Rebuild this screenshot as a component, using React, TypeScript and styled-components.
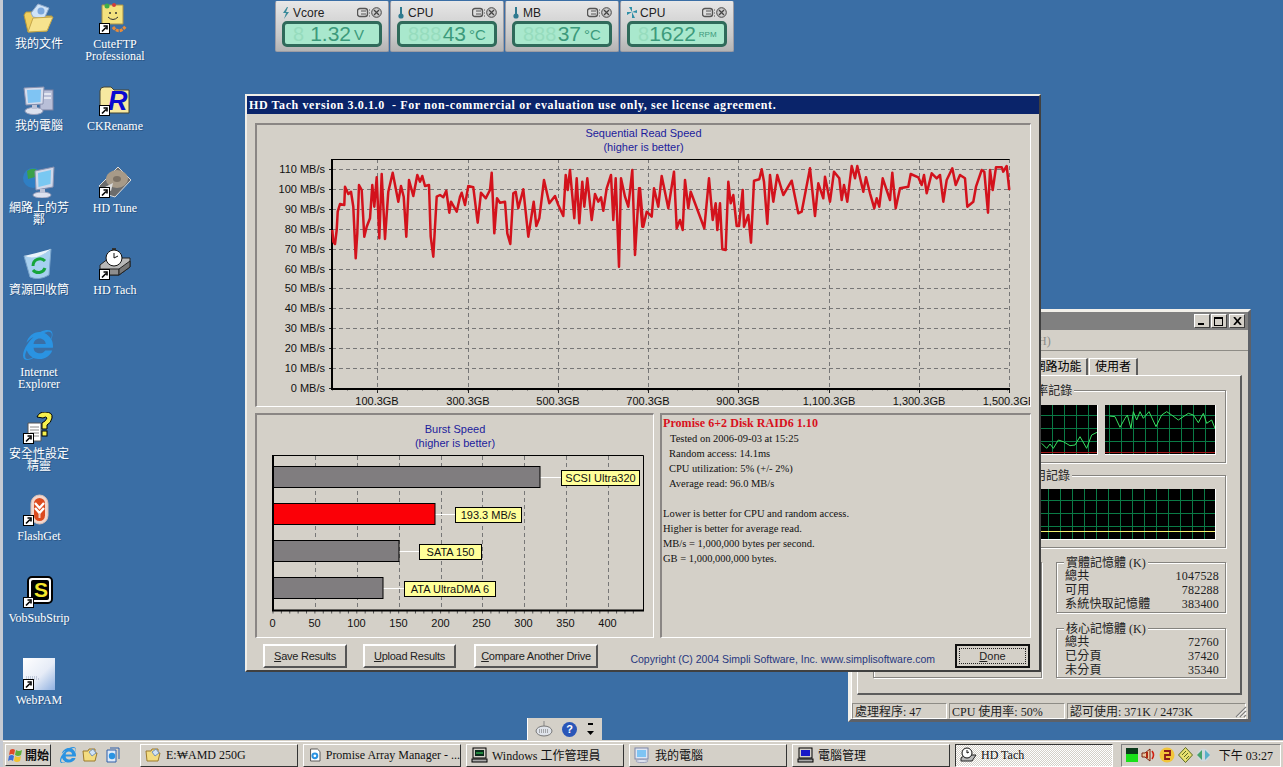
import React from "react";
import styled, { createGlobalStyle } from "styled-components";
import { FaInternetExplorer } from "react-icons/fa";

const SERIF = `"Liberation Serif", "Noto Sans CJK TC", serif`;
const SANS = `"Liberation Sans", Arial, sans-serif`;
const FACE = "#d4d0c8";

const Global = createGlobalStyle`
  html, body { margin: 0; padding: 0; overflow: hidden; background: #3a6ea5; }
  * { box-sizing: border-box; }
`;

const Screen = styled.div`
  position: relative;
  width: 1283px;
  height: 767px;
  display: flex;
  flex-direction: column;
  overflow: hidden;
  font-family: ${SERIF};
  font-size: 12px;
  color: #000;
`;

const Desktop = styled.div`
  flex: 1;
  background: #3a6ea5;
  border-left: 3px solid #c5cad3;
  display: grid;
  grid-template-rows: repeat(9, 82px);
  grid-auto-flow: column;
  grid-auto-columns: 72px;
  column-gap: 4px;
  align-content: start;
`;

const DesktopItem = styled.div`
  display: flex;
  flex-direction: column;
  align-items: center;
  padding-top: 2px;
`;

const IconBox = styled.div`
  position: relative;
  width: 32px;
  height: 32px;
  line-height: 0;
`;

const ShortcutBadge = styled.svg`
  position: absolute;
  left: 0;
  bottom: 0;
`;

const DesktopLabel = styled.div`
  width: 66px;
  margin-top: 4px;
  color: #fff;
  font-size: 12px;
  line-height: 12px;
  text-align: center;
  text-shadow: 1px 1px 0 #2a5584;
`;

/* ---------- desktop icons ---------- */

const Shortcut = () => (
  <ShortcutBadge width="11" height="11" viewBox="0 0 11 11">
    <rect x="0.5" y="0.5" width="10" height="10" fill="#fff" stroke="#000" />
    <path d="M3 8.5 L7 4.5 M4.5 3 H8 V6.5" stroke="#000" strokeWidth="1.6" fill="none" />
  </ShortcutBadge>
);

const DocsIcon = () => (
  <svg width="32" height="32" viewBox="0 0 32 32">
    <path d="M1 13 L5 30 L24 29 L29 14 L15 14 L13 10 L3 10Z" fill="#f0d060" stroke="#b89a3c" />
    <path d="M8 11 L15 2 L26 6 L21 17 L10 15Z" fill="#cfe3f7" stroke="#8fa8c8" />
    <circle cx="18" cy="9" r="3.5" fill="#7ba7dc" />
    <path d="M5 30 L10 16 L30 15 L24 29Z" fill="#f7e38e" stroke="#c4a64a" />
  </svg>
);

const CuteIcon = () => (
  <svg width="32" height="32" viewBox="0 0 32 32">
    <path d="M3 3 H24 V22 H3Z" fill="#f3e27e" stroke="#a89148" />
    <circle cx="8" cy="4" r="2.5" fill="#3fae49" />
    <circle cx="15" cy="3" r="2" fill="#d23a3a" />
    <circle cx="11" cy="11" r="1" fill="#333" />
    <circle cx="17" cy="11" r="1" fill="#333" />
    <path d="M9 15 Q14 20 19 15" stroke="#333" fill="none" />
    <path d="M14 25 Q20 33 27 24" stroke="#e88b3a" strokeWidth="3" fill="none" strokeDasharray="3 1" />
  </svg>
);

const ComputerIcon = () => (
  <svg width="32" height="32" viewBox="0 0 32 32">
    <rect x="17" y="6" width="13" height="20" fill="#b9bfd8" stroke="#7b82a3" />
    <rect x="19" y="9" width="9" height="2" fill="#e3e6f1" />
    <rect x="19" y="13" width="9" height="2" fill="#e3e6f1" />
    <path d="M1 4 L21 3 L20 20 L3 21Z" fill="#d5dcec" stroke="#8a92b0" />
    <path d="M4 6 L18 5.5 L17.5 18 L5 19Z" fill="#7fc4f3" />
    <ellipse cx="11" cy="27" rx="9" ry="3.5" fill="#dde1ee" stroke="#9aa0bb" />
    <rect x="9" y="21" width="5" height="4" fill="#bcc2d6" />
  </svg>
);

const RenameGlyph = styled.text`
  font: italic bold 27px ${SANS};
  fill: #0a0ad0;
`;

const RenameIcon = () => (
  <svg width="32" height="32" viewBox="0 0 32 32">
    <path d="M1 7 Q1 3 5 3 H12 L15 6 H30 V29 H1Z" fill="#f7e9a0" stroke="#443" />
    <RenameGlyph x="9" y="26">R</RenameGlyph>
  </svg>
);

const NetworkIcon = () => (
  <svg width="32" height="32" viewBox="0 0 32 32">
    <circle cx="10" cy="12" r="10" fill="#2f7fc4" />
    <path d="M4 5 Q10 1 14 4 L12 11 L5 13Z" fill="#3aa04a" />
    <path d="M12 5 L31 1 L30 21 L13 24Z" fill="#cfd8ea" stroke="#8a92b0" />
    <path d="M15 7 L28 4 L27.5 18 L15.5 21Z" fill="#79c8f2" />
    <ellipse cx="19" cy="29" rx="9" ry="3" fill="#dde1ee" stroke="#9aa0bb" />
    <rect x="17" y="23" width="5" height="4" fill="#bcc2d6" />
  </svg>
);

const TuneIcon = () => (
  <svg width="32" height="32" viewBox="0 0 32 32">
    <path d="M0 20 L19 1 L32 14 L16 31 L3 27Z" fill="#6c6c6c" stroke="#dcdcdc" />
    <ellipse cx="18" cy="13" rx="11" ry="9" fill="#a79a88" />
    <ellipse cx="18" cy="13" rx="4" ry="3" fill="#7d7265" />
    <path d="M4 22 L14 17 L12 25Z" fill="#ddd" />
  </svg>
);

const RecycleIcon = () => (
  <svg width="32" height="32" viewBox="0 0 32 32">
    <path d="M1 8 Q14 11 28 1 L26 27 Q16 33 7 29Z" fill="#a7d0ef" stroke="#7aa4ca" />
    <path d="M1 8 Q14 13 28 1 Q14 5 1 8Z" fill="#e8f3fb" />
    <path d="M10 18 A7 7 0 0 1 22 13 M22 20 A7 7 0 0 1 10 22" stroke="#16a53a" strokeWidth="3" fill="none" />
  </svg>
);

const StopwatchIcon = () => (
  <svg width="32" height="32" viewBox="0 0 32 32">
    <path d="M1 17 L10 10 H31 V19 L20 27 H1Z" fill="#b8b8b8" stroke="#222" />
    <path d="M1 21 H20 V27 H1Z" fill="#8e8e8e" stroke="#222" />
    <path d="M20 21 L31 13 V19 L20 27Z" fill="#777" stroke="#222" />
    <rect x="13" y="0" width="4" height="2" fill="#333" />
    <circle cx="15" cy="10" r="8" fill="#fff" stroke="#111" />
    <path d="M15 5 V10 L19 8" stroke="#111" fill="none" />
  </svg>
);

const IeIcon = styled(FaInternetExplorer)`
  color: #2a93e2;
`;

const WizardIcon = () => (
  <svg width="32" height="32" viewBox="0 0 32 32">
    <path d="M5 11 H18 V29 H5Z" fill="#fff" stroke="#555" />
    <path d="M7 15 H16 M7 18 H16 M7 21 H16 M7 24 H16" stroke="#888" />
    <path d="M14 5 Q16 0 22 0 Q30 0 29 6 Q28 11 24 13 V17 H19 V11 Q23 9 24 6 Q23 4 20 6Z" fill="#f6f14e" stroke="#000" />
    <rect x="19" y="19" width="5" height="5" fill="#f6f14e" stroke="#000" />
  </svg>
);

const FlashIcon = () => (
  <svg width="32" height="32" viewBox="0 0 32 32">
    <rect x="8" y="1" width="17" height="29" rx="8.5" fill="#f3d6cc" stroke="#d8c0b6" />
    <rect x="11" y="4" width="11" height="23" rx="5.5" fill="#dc4a1e" />
    <path d="M12 9 L16.5 14 L21 9 M12 14 L16.5 19 L21 14" stroke="#fff" strokeWidth="2.4" fill="none" />
    <path d="M16.5 19 V24" stroke="#f8cbb9" strokeWidth="2" />
  </svg>
);

const VobGlyph = styled.text`
  font: bold 21px ${SANS};
  fill: #f6e62b;
`;

const VobIcon = () => (
  <svg width="32" height="32" viewBox="0 0 32 32">
    <rect x="5" y="1" width="24" height="26" rx="4" fill="#fff" stroke="#000" strokeWidth="2" />
    <rect x="8" y="4" width="18" height="20" rx="2" fill="#000" />
    <VobGlyph x="11" y="21">S</VobGlyph>
  </svg>
);

const WebPamIcon = () => (
  <svg width="32" height="32" viewBox="0 0 32 32">
    <defs>
      <linearGradient id="pam" x1="0" y1="0" x2="1" y2="1">
        <stop offset="0" stopColor="#ffffff" />
        <stop offset="0.55" stopColor="#e6ecf7" />
        <stop offset="1" stopColor="#8fb0e0" />
      </linearGradient>
    </defs>
    <rect width="32" height="32" fill="url(#pam)" />
    <path d="M3 19 H15 M3 21 H17" stroke="#9aa8c0" strokeDasharray="1 1" />
  </svg>
);

const icons: { label: string; art: React.ReactNode; shortcut?: boolean }[] = [
  { label: "我的文件", art: <DocsIcon /> },
  { label: "我的電腦", art: <ComputerIcon /> },
  { label: "網路上的芳鄰", art: <NetworkIcon /> },
  { label: "資源回收筒", art: <RecycleIcon /> },
  { label: "Internet Explorer", art: <IeIcon size={30} /> },
  { label: "安全性設定精靈", art: <WizardIcon />, shortcut: true },
  { label: "FlashGet", art: <FlashIcon />, shortcut: true },
  { label: "VobSubStrip", art: <VobIcon />, shortcut: true },
  { label: "WebPAM", art: <WebPamIcon />, shortcut: true },
  { label: "CuteFTP Professional", art: <CuteIcon />, shortcut: true },
  { label: "CKRename", art: <RenameIcon />, shortcut: true },
  { label: "HD Tune", art: <TuneIcon />, shortcut: true },
  { label: "HD Tach", art: <StopwatchIcon />, shortcut: true },
];

/* ---------- sensor gadgets ---------- */

const SensorBar = styled.div`
  position: absolute;
  left: 275px;
  top: 1px;
  display: flex;
  gap: 1px;
`;

const Sensor = styled.div`
  width: 114px;
  height: 51px;
  padding: 3px 6px 0 6px;
  background: linear-gradient(#e6e6e6, #c8c8c8 70%, #b4b4b4);
  border: 1px solid #9c9ca4;
  border-top-color: #e8e8e8;
  border-radius: 2px;
`;

const SensorHead = styled.div`
  display: flex;
  align-items: center;
  gap: 3px;
  height: 15px;
  font: 12px ${SANS};
  color: #222;
`;

const SensorName = styled.span`
  flex: 1;
`;

const Lcd = styled.div`
  display: flex;
  align-items: center;
  height: 26px;
  margin-top: 1px;
  padding: 0 3px 0 8px;
  border: 3px solid #2f6a5a;
  border-radius: 5px;
  background: #a9e8cd;
  font-family: ${SANS};
  color: #3c9a7b;
  overflow: hidden;
`;

const LcdGhost = styled.span`
  color: #96dcbd;
  font-size: 20px;
  line-height: 20px;
`;

const LcdValue = styled.span`
  flex: 1;
  text-align: right;
  font-size: 21px;
  line-height: 20px;
`;

const LcdUnit = styled.span<{ $small?: boolean }>`
  width: ${(p) => (p.$small ? "27px" : "25px")};
  padding-left: 3px;
  font-size: ${(p) => (p.$small ? "8px" : "15px")};
  line-height: 15px;
`;

const BoltIcon = () => (
  <svg width="8" height="12" viewBox="0 0 8 12">
    <path d="M5 0 L1 6 H4 L2 12 L7 5 H4 L6 0Z" fill="#3a8a9a" />
  </svg>
);
const ThermoIcon = () => (
  <svg width="8" height="12" viewBox="0 0 8 12">
    <rect x="3" y="0" width="2" height="8" fill="#2f7a8f" />
    <circle cx="4" cy="9" r="2.6" fill="#2f7a8f" />
  </svg>
);
const FanIcon = () => (
  <svg width="10" height="11" viewBox="0 0 10 11">
    <path d="M5 5 L2 0 H5Z M5 5 L10 3 V6Z M5 5 L8 11 H5Z M5 5 L0 8 V5Z" fill="#2f8fa8" />
  </svg>
);
const SensorTools = () => (
  <svg width="25" height="11" viewBox="0 0 25 11">
    <rect x="0.5" y="1.5" width="10" height="8" rx="2.5" fill="#ddd" stroke="#555" strokeWidth="1.4" />
    <path d="M4 4 H9 M4 7 H9" stroke="#555" />
    <path d="M12 3 H13 M12 6 H13 M12 9 H13" stroke="#555" />
    <circle cx="19.5" cy="5.5" r="4.8" fill="#ccc" stroke="#444" />
    <path d="M17 3 L22 8 M22 3 L17 8" stroke="#444" strokeWidth="1.3" />
  </svg>
);

const sensors = [
  { name: "Vcore", icon: <BoltIcon />, ghost: "8", value: "1.32", unit: "V" },
  { name: "CPU", icon: <ThermoIcon />, ghost: "888", value: "43", unit: "°C" },
  { name: "MB", icon: <ThermoIcon />, ghost: "888", value: "37", unit: "°C" },
  { name: "CPU", icon: <FanIcon />, ghost: "8", value: "1622", unit: "RPM", small: true },
];

/* ---------- HD Tach window ---------- */

const TachWindow = styled.div`
  position: absolute;
  left: 245px;
  top: 94px;
  z-index: 2;
  width: 796px;
  height: 578px;
  display: flex;
  flex-direction: column;
  background: ${FACE};
  border: 2px solid;
  border-color: #f0eee8 #404040 #404040 #f0eee8;
`;

const TachTitle = styled.div`
  height: 18px;
  padding-left: 2px;
  background: #0a246a;
  color: #fff;
  font: bold 12px/18px ${SERIF};
  letter-spacing: 0.6px;
  white-space: pre;
`;

const TachBody = styled.div`
  flex: 1;
  display: flex;
  flex-direction: column;
  padding: 9px 8px 0;
  gap: 6px;
`;

const Panel = styled.div<{ $height: number }>`
  height: ${(p) => p.$height}px;
  border: 2px solid;
  border-color: #8a8684 #fff #fff #8a8684;
  border-width: 2px 1px 1px 2px;
  overflow: hidden;
`;

const PanelRow = styled.div`
  display: grid;
  grid-template-columns: 399px 371px;
  column-gap: 6px;
`;

const ChartTitle = styled.div<{ $top: number }>`
  padding-top: ${(p) => p.$top}px;
  text-align: center;
  color: #1c1c9c;
  font: 11px/14px ${SANS};
`;

const ChartSvg = styled.svg`
  display: block;
`;

const AxisText = styled.text`
  font: 11px ${SANS};
  fill: #111;
`;

const TagText = styled.text`
  font: 11px ${SANS};
  fill: #111;
`;

const DetailPane = styled.div`
  padding: 1px 0 0 1px;
  font: 10.5px/15px ${SERIF};
  color: #111;
`;

const DetailHead = styled.div`
  color: #d8101c;
  font-weight: bold;
  font-size: 12px;
  letter-spacing: 0.05px;
`;

const DetailLine = styled.div<{ $indent?: number; $gap?: boolean }>`
  padding-left: ${(p) => p.$indent ?? 0}px;
  margin-top: ${(p) => (p.$gap ? "15px" : "0")};
`;

const ButtonRow = styled.div`
  display: flex;
  align-items: center;
  height: 24px;
  padding: 0 1px 0 8px;
`;

const WinButton = styled.button<{ $width: number; $after?: number }>`
  width: ${(p) => p.$width}px;
  height: 24px;
  margin-right: ${(p) => p.$after ?? 0}px;
  padding: 0;
  background: ${FACE};
  color: #222;
  font: 11px ${SANS};
  letter-spacing: -0.25px;
  white-space: nowrap;
  border: 2px solid;
  border-color: #fff #555 #555 #fff;
`;

const DoneButton = styled.button`
  width: 75px;
  height: 24px;
  padding: 2px;
  background: ${FACE};
  border: 2px solid #111;
  font: 11px ${SANS};
  color: #222;
`;

const DoneFocus = styled.span`
  display: block;
  height: 100%;
  line-height: 15px;
  border: 1px dotted #222;
`;

const Copyright = styled.div`
  flex: 1;
  text-align: right;
  padding: 5px 20px 0 0;
  color: #27377f;
  font: 10.5px ${SANS};
`;

/* red trace, traced in crop coordinates */
const traceA: [number, number][] = [
  [262,420],[265,455],[270,462],[275,420],[278,365],[285,342],[298,345],[300,290],[310,312],[318,305],[325,350],[332,505],[337,430],[342,285],[350,300],[358,440],[365,410],[375,385],[382,285],[388,350],[395,262],[403,445],[410,252],[420,447],[430,305],[443,248],[460,335],[468,288],[476,320],[484,440],[492,270],[505,318],[517,255],[525,275],[532,258],[540,288],[552,285],[557,440],[565,500],[575,320],[585,315],[595,322],[604,302],[613,368],[618,335],[635,365],[645,320],[650,308],[660,345],[670,288],[685,292],[698,398],[708,308],[722,325],[735,300],[740,248],[748,430],[756,325],[765,338],[780,335],[787,430],[796,462],[805,310],[812,305],[820,355],[835,298],[850,440],[866,335],[874,408],[883,385],[897,270],[913,340],[930,318],[940,345],[955,378],[962,255],[968,300],[975,240],[988,385],[995,265],[1003,400],[1012,275],[1018,350],[1027,265],[1040,390],[1050,312],[1060,335],[1068,322],[1075,362],[1085,295],[1098,255],[1105,390],[1112,265],[1122,530],[1128,265],[1140,320],[1150,350],[1162,240],[1170,495],[1182,295],[1192,410],
];
const traceB: [number, number][] = [
  [0,295],[10,410],[20,365],[35,380],[42,295],[55,350],[65,258],[85,355],[102,245],[110,415],[120,390],[128,420],[135,270],[145,355],[152,305],[165,340],[193,415],[207,265],[218,390],[227,340],[232,420],[240,340],[247,478],[257,480],[265,275],[272,340],[280,315],[290,408],[297,408],[308,300],[312,410],[325,375],[333,458],[342,272],[358,268],[365,238],[372,275],[382,402],[390,255],[400,335],[412,255],[430,315],[455,272],[475,370],[485,365],[510,235],[525,378],[535,280],[550,325],[555,260],[570,335],[582,245],[598,265],[605,330],[612,285],[622,335],[635,228],[645,265],[652,228],[670,305],[678,262],[690,310],[703,355],[710,325],[718,350],[728,265],[750,330],[757,248],[767,355],[780,295],[805,290],[812,252],[835,262],[845,285],[852,255],[860,310],[875,250],[890,265],[900,255],[910,335],[920,270],[937,235],[947,285],[960,255],[975,265],[982,350],[1000,335],[1008,290],[1025,240],[1033,245],[1044,368],[1050,240],[1058,300],[1068,232],[1085,232],[1090,245],[1100,228],[1108,300],
];
const traceLine = [
  ...traceA.map(([x, y]) => `${(245 + x / 3).toFixed(1)},${(90 + y / 3).toFixed(1)}`),
  ...traceB.map(([x, y]) => `${(640 + x / 3).toFixed(1)},${(90 + y / 3).toFixed(1)}`),
].join(" ");

const yLines = [388, 368, 348, 328, 308, 288, 269, 249, 229, 209, 189, 169];
const xLines = [377, 468, 558, 648, 738, 829, 919, 1009];
const xNames = ["100.3GB", "300.3GB", "500.3GB", "700.3GB", "900.3GB", "1,100.3GB", "1,300.3GB", "1,500.3GB"];
const minorTicks = Array.from({ length: 46 }, (_, i) => 332 + i * 15);

const SpeedChart = () => (
  <ChartSvg width="773" height="253" viewBox="257 154 773 253">
    {yLines.map((y, i) => (
      <g key={y}>
        <line x1="329" x2="332" y1={y + 0.5} y2={y + 0.5} stroke="#222" />
        {i > 0 && <line x1="332" x2="1009" y1={y + 0.5} y2={y + 0.5} stroke="#777" strokeDasharray="4 3" />}
        <AxisText x="325" y={y + 4} textAnchor="end">{`${i * 10} MB/s`}</AxisText>
      </g>
    ))}
    {xLines.map((x, i) => (
      <g key={x}>
        <line x1={x + 0.5} x2={x + 0.5} y1="159" y2="388" stroke="#777" strokeDasharray="4 3" />
        <line x1={x + 0.5} x2={x + 0.5} y1="388" y2="393" stroke="#222" />
        <AxisText x={x} y="405" textAnchor="middle">{xNames[i]}</AxisText>
      </g>
    ))}
    {minorTicks.map((x) => (
      <line key={x} x1={x + 0.5} x2={x + 0.5} y1="388" y2="390.5" stroke="#555" />
    ))}
    <path d="M1009.5 159.5 H332.5 V388.5 H1009.5" fill="none" stroke="#000" strokeWidth="1" />
    <path d="M332 159 V389 H1010" fill="none" stroke="#000" strokeWidth="2" />
    <polyline points={traceLine} fill="none" stroke="#d3121c" strokeWidth="2.5" strokeLinejoin="round" />
  </ChartSvg>
);

const burstTicks = [
  { x: 273, n: "0" }, { x: 315, n: "50" }, { x: 357, n: "100" }, { x: 399, n: "150" }, { x: 441, n: "200" },
  { x: 482, n: "250" }, { x: 524, n: "300" }, { x: 566, n: "350" }, { x: 608, n: "400" },
];
const burstBars = [
  { y: 466, end: 540, fill: "#807d7f", tagX: 561, tagW: 78, text: "SCSI Ultra320" },
  { y: 503, end: 435, fill: "#fb0007", tagX: 455, tagW: 66, text: "193.3 MB/s" },
  { y: 540, end: 399, fill: "#807d7f", tagX: 419, tagW: 62, text: "SATA 150" },
  { y: 577, end: 383, fill: "#807d7f", tagX: 404, tagW: 91, text: "ATA UltraDMA 6" },
];
const burstMinor = Array.from({ length: 44 }, (_, i) => 273 + i * 8.38);

const BurstChart = () => (
  <ChartSvg width="396" height="187" viewBox="257 450 396 187">
    {burstTicks.map((t) => (
      <g key={t.n}>
        {t.x > 273 && <line x1={t.x + 0.5} x2={t.x + 0.5} y1="456" y2="610" stroke="#777" strokeDasharray="4 3" />}
        <AxisText x={t.x - 0.5} y="627" textAnchor="middle">{t.n}</AxisText>
      </g>
    ))}
    {burstMinor.map((x) => (
      <line key={x} x1={x} x2={x} y1="610" y2="613.5" stroke="#555" />
    ))}
    <path d="M273.5 455.5 H643.5 V610" fill="none" stroke="#000" />
    <path d="M273 455 V610.5 H644" fill="none" stroke="#000" strokeWidth="2" />
    {burstBars.map((b) => (
      <g key={b.text}>
        <line x1={b.end} x2={b.tagX} y1={b.y + 11.5} y2={b.y + 11.5} stroke="#fff" />
        <rect x="273.5" y={b.y + 0.5} width={b.end - 273.5} height="21" fill={b.fill} stroke="#000" />
        <rect x={b.tagX + 0.5} y={b.y + 4.5} width={b.tagW} height="15" fill="#ffff99" stroke="#000" />
        <TagText x={b.tagX + b.tagW / 2 + 0.5} y={b.y + 16} textAnchor="middle">{b.text}</TagText>
      </g>
    ))}
  </ChartSvg>
);

/* ---------- Task manager window ---------- */

const TaskWindow = styled.div`
  position: absolute;
  left: 848px;
  top: 309px;
  z-index: 1;
  width: 403px;
  display: flex;
  flex-direction: column;
  background: ${FACE};
  border: 3px solid ${FACE};
  box-shadow: inset 1px 1px 0 #fff;
  border-top-color: #f2f0ea;
  border-left-color: #f2f0ea;
  border-right-color: #5d6168;
  border-bottom-color: #5d6168;
`;

const TaskTitle = styled.div`
  height: 18px;
  display: flex;
  align-items: center;
  justify-content: flex-end;
  gap: 1px;
  padding-right: 3px;
  background: #808080;
  color: #d4d0c8;
  font-weight: bold;
`;

const TitleLabel = styled.span`
  flex: 1;
  padding-left: 20px;
`;

const CaptionButton = styled.div<{ $gap?: number }>`
  width: 16px;
  height: 14px;
  margin-left: ${(p) => p.$gap ?? 0}px;
  display: flex;
  align-items: center;
  justify-content: center;
  background: ${FACE};
  border: 1px solid;
  border-color: #fff #404040 #404040 #fff;
`;

const MenuBar = styled.div`
  height: 21px;
  display: flex;
  align-items: center;
  gap: 8px;
  padding-left: 15px;
  color: #8c8c88;
  border-bottom: 1px solid #8e8c86;
`;

const TabRow = styled.div`
  height: 24px;
  display: flex;
  align-items: flex-end;
  padding-left: 18px;
  gap: 1px;
`;

const Tab = styled.div<{ $width: number }>`
  width: ${(p) => p.$width}px;
  height: 17px;
  text-align: center;
  line-height: 17px;
  font-size: 12px;
  border-left: 1px solid #fff;
  border-top: 1px solid #fff;
  border-right: 2px solid #5c5c5c;
`;

const TabPanel = styled.div`
  height: 320px;
  margin: 0 6px;
  padding: 7px 14px 15px 15px;
  display: flex;
  flex-direction: column;
  border: 1px solid #fff;
  border-right: 2px solid #5c5c5c;
  border-bottom: 2px solid #5c5c5c;
`;

const Group = styled.fieldset<{ $width?: number; $height: number; $grow?: boolean }>`
  margin: 0;
  padding: 0;
  min-width: 0;
  width: ${(p) => (p.$width ? `${p.$width}px` : "auto")};
  flex: ${(p) => (p.$grow ? 1 : "none")};
  height: ${(p) => p.$height}px;
  border: 1px solid #85837f;
  box-shadow: 1px 1px 0 #fff, inset 1px 1px 0 #fff;
`;

const GroupLegend = styled.legend<{ $left: number }>`
  margin-left: ${(p) => p.$left}px;
  padding: 0 2px;
  height: 14px;
  line-height: 16px;
  background: ${FACE};
  font-size: 12px;
  color: #222;
`;

const HistoryRow = styled.div<{ $after: number }>`
  display: flex;
  gap: 10px;
  margin-bottom: ${(p) => p.$after}px;
`;

const GraphRow = styled.div<{ $top: number }>`
  display: flex;
  justify-content: flex-end;
  gap: 7px;
  padding: ${(p) => p.$top}px 9px 0 0;
`;

const GraphSvg = styled.svg`
  display: block;
  background: #000;
  border-right: 1px solid #fff;
  border-bottom: 1px solid #fff;
`;

const BottomRow = styled.div`
  display: flex;
  gap: 14px;
`;

const StatColumn = styled.div`
  width: 170px;
  display: flex;
  flex-direction: column;
  gap: 8px;
`;

const StatRow = styled.div`
  display: flex;
  justify-content: space-between;
  height: 14px;
  padding: 0 6px 0 8px;
  line-height: 14px;
  font-size: 12px;
  color: #222;
  letter-spacing: 0.2px;
`;

const StatusBar = styled.div`
  position: relative;
  height: 16px;
  margin-top: 8px;
  display: flex;
  gap: 2px;
  padding-left: 1px;
  font-size: 12px;
  line-height: 16px;
`;

const StatusPane = styled.div<{ $width: number }>`
  width: ${(p) => p.$width}px;
  padding-left: 2px;
  border: 1px solid;
  border-color: #8e8c86 #fff #fff #8e8c86;
  color: #222;
  white-space: nowrap;
`;

const Grip = styled.svg`
  position: absolute;
  right: 1px;
  bottom: 1px;
`;

type Pt = [number, number];
const gridLines = (w: number, h: number, dx: number, dy: number) => {
  const out: React.ReactNode[] = [];
  for (let x = dx; x < w; x += 12) out.push(<line key={`v${x}`} x1={x + 0.5} x2={x + 0.5} y1="0" y2={h} stroke="#0a7a45" />);
  for (let y = dy; y < h; y += 13) out.push(<line key={`h${y}`} x1="0" x2={w} y1={y + 0.5} y2={y + 0.5} stroke="#0a7a45" />);
  return out;
};
const toLine = (pts: Pt[], ox: number, oy: number) => pts.map(([x, y]) => `${ox + x / 3},${oy + y / 3}`).join(" ");

const cpuA: Pt[] = [[35,430],[50,445],[60,432],[70,445],[85,420],[100,425],[120,437],[135,435],[150,410],[170,445],[185,405],[205,395]];
const cpuB: Pt[] = [[238,348],[255,350],[270,382],[285,355],[292,345],[303,385],[310,335],[320,360],[330,335],[340,355],[357,335],[378,380],[395,345],[410,335],[425,345],[445,360],[475,340],[490,345],[505,368],[520,340],[530,370],[545,360],[555,385]];

const CpuGraphA = () => (
  <GraphSvg width="110" height="50">
    {gridLines(110, 50, 4, 10)}
    <line x1="0" x2="110" y1="47.5" y2="47.5" stroke="#a01818" />
    <polyline points={toLine(cpuA, 42, -105)} fill="none" stroke="#38e060" />
  </GraphSvg>
);
const CpuGraphB = () => (
  <GraphSvg width="111" height="50">
    {gridLines(111, 50, 4, 10)}
    <line x1="0" x2="111" y1="47.5" y2="47.5" stroke="#a01818" />
    <polyline points={toLine(cpuB, -75, -105)} fill="none" stroke="#38e060" />
  </GraphSvg>
);
const MemGraph = () => (
  <GraphSvg width="232" height="51">
    {gridLines(232, 51, 4, 11)}
    <line x1="0" x2="232" y1="42.5" y2="42.5" stroke="#f4f070" />
  </GraphSvg>
);

/* ---------- Taskbar ---------- */

const Taskbar = styled.div`
  height: 27px;
  display: flex;
  align-items: center;
  padding: 2px 2px 0 2px;
  background: ${FACE};
  border-left: 3px solid #c5cad3;
  border-top: 1px solid ${FACE};
  box-shadow: inset 0 1px 0 #fff;
`;

const StartButton = styled.button`
  width: 46px;
  height: 22px;
  display: flex;
  align-items: center;
  gap: 1px;
  padding: 0 0 0 1px;
  background: ${FACE};
  font: bold 12px ${SERIF};
  color: #111;
  white-space: nowrap;
  border: 1px solid;
  border-color: #fff #333 #333 #fff;
`;

const QuickLaunch = styled.div`
  width: 89px;
  display: flex;
  align-items: center;
  gap: 6px;
  padding-left: 9px;
`;

const TaskGroup = styled.div`
  display: flex;
  gap: 5px;
`;

const TaskButton = styled.div<{ $active?: boolean }>`
  width: 158px;
  height: 23px;
  display: flex;
  align-items: center;
  gap: 4px;
  padding-left: 4px;
  font-size: 12px;
  color: #111;
  white-space: nowrap;
  border: 1px solid;
  border-color: ${(p) => (p.$active ? "#333 #fff #fff #333" : "#fff #333 #333 #fff")};
  ${(p) =>
    p.$active
      ? `background: repeating-conic-gradient(#fff 0 25%, #d4d0c8 0 50%) 0 0 / 2px 2px;`
      : `background: ${FACE};`}
`;

const Tray = styled.div`
  width: 160px;
  height: 23px;
  margin-left: auto;
  display: flex;
  align-items: center;
  gap: 3px;
  padding-left: 4px;
  border: 1px solid;
  border-color: #808080 #fff #fff #808080;
`;

const Clock = styled.span`
  margin-left: auto;
  padding-right: 7px;
  font-size: 12px;
  color: #111;
  white-space: nowrap;
`;

const LangBar = styled.div`
  position: absolute;
  left: 527px;
  top: 718px;
  width: 75px;
  height: 22px;
  display: flex;
  align-items: center;
  gap: 9px;
  padding-left: 7px;
  background: ${FACE};
  border-left: 1px solid #fff;
`;

const HelpDot = styled.span`
  width: 15px;
  height: 15px;
  border-radius: 50%;
  background: #2a56b8;
  color: #fff;
  font: bold 11px/15px ${SANS};
  text-align: center;
`;

const WinFlag = () => (
  <svg width="17" height="16" viewBox="0 0 17 16">
    <path d="M3 3 Q6 1 8 3 L7 8 Q5 6 2 8Z" fill="#e0492a" />
    <path d="M9 3 Q12 5 15 3 L14 8 Q11 10 8 8Z" fill="#5fae3a" />
    <path d="M2 9 Q5 7 7 9 L6 14 Q4 12 1 14Z" fill="#3c6fd8" />
    <path d="M8 9 Q11 11 14 9 L13 14 Q10 16 7 14Z" fill="#f2c230" />
  </svg>
);
const FolderSmall = () => (
  <svg width="17" height="16" viewBox="0 0 17 16">
    <path d="M1 4 H6 L7 2 H13 V6 H15 L13 14 H2Z" fill="#f3dc80" stroke="#9c7a2c" />
    <path d="M7 5 L11 2 L14 6 L10 9Z" fill="#cfe3f7" stroke="#7892b8" />
  </svg>
);
const PageSmall = () => (
  <svg width="16" height="16" viewBox="0 0 16 16">
    <path d="M3 1 H11 L14 4 V15 H3Z" fill="#fff" stroke="#444" />
    <circle cx="8" cy="9" r="4" fill="#2a93e2" />
    <circle cx="8" cy="9" r="1.6" fill="#fff" />
  </svg>
);
const DeskEditSmall = () => (
  <svg width="16" height="16" viewBox="0 0 16 16">
    <path d="M2 3 H11 V15 H2Z" fill="#dfe9f7" stroke="#2f5fa8" />
    <path d="M5 1 H14 V12" fill="none" stroke="#2f5fa8" />
    <circle cx="7" cy="9" r="3.2" fill="#2a93e2" />
  </svg>
);
const MonitorSmall = () => (
  <svg width="17" height="16" viewBox="0 0 17 16">
    <rect x="2" y="1" width="13" height="10" fill="#d4d0c8" stroke="#000" />
    <rect x="4" y="3" width="9" height="6" fill="#0a2a1a" />
    <path d="M5 6 H12" stroke="#3be060" />
    <rect x="1" y="12" width="15" height="3" fill="#a8a8a8" stroke="#000" />
  </svg>
);
const ComputerSmall = () => (
  <svg width="17" height="16" viewBox="0 0 17 16">
    <rect x="1" y="1" width="13" height="11" fill="#dfe6f3" stroke="#7c86a8" />
    <rect x="3" y="3" width="9" height="7" fill="#7fc4f3" />
    <ellipse cx="8" cy="14" rx="6" ry="1.6" fill="#dde1ee" stroke="#9aa0bb" />
  </svg>
);
const ManagerSmall = () => (
  <svg width="17" height="16" viewBox="0 0 17 16">
    <rect x="2" y="1" width="13" height="10" fill="#d4d0c8" stroke="#000" />
    <rect x="4" y="3" width="9" height="6" fill="#1818c8" />
    <rect x="1" y="12" width="15" height="3" fill="#a8a8a8" stroke="#000" />
  </svg>
);
const WatchSmall = () => (
  <svg width="17" height="16" viewBox="0 0 17 16">
    <path d="M1 11 L5 8 H16 L12 14 H1Z" fill="#b8b8b8" stroke="#222" />
    <circle cx="7" cy="6" r="5" fill="#fff" stroke="#111" />
    <path d="M7 3 V6 L9 5" stroke="#111" fill="none" />
  </svg>
);
const TrayMeter = () => (
  <svg width="12" height="14" viewBox="0 0 12 14">
    <rect width="12" height="14" fill="#0a3a1a" />
    <rect y="6" width="12" height="8" fill="#19e019" />
  </svg>
);
const TraySpeaker = () => (
  <svg width="15" height="16" viewBox="0 0 15 16">
    <path d="M1 6 H4 L9 2 V14 L4 10 H1Z" fill="#e8c8a0" stroke="#7a2410" />
    <path d="M11 4 Q14 8 11 12" stroke="#d02010" strokeWidth="1.6" fill="none" />
    <path d="M6 5 V11" stroke="#b02810" strokeWidth="2" />
  </svg>
);
const TrayCoin = () => (
  <svg width="16" height="16" viewBox="0 0 16 16">
    <circle cx="8" cy="8" r="7.5" fill="#f2c53a" />
    <path d="M5 4 H11 V8 H6 V12 H11" stroke="#8a1818" strokeWidth="1.8" fill="none" />
  </svg>
);
const TrayDiamond = () => (
  <svg width="15" height="16" viewBox="0 0 15 16">
    <path d="M7.5 0.5 L14.5 8 L7.5 15.5 L0.5 8Z" fill="#e8e070" stroke="#5a6a20" />
    <path d="M4 8 L8 4 M6 10 L10 6 M8 12 L11 9" stroke="#5a6a20" />
  </svg>
);
const TrayOrb = () => (
  <svg width="15" height="16" viewBox="0 0 15 16">
    <circle cx="7.5" cy="8" r="6.5" fill="#cfd8dc" />
    <path d="M1 8 L6 3 V13Z" fill="#46a36a" />
    <path d="M14 8 L9 3 V13Z" fill="#5ab0c8" />
  </svg>
);

export default function App() {
  return (
    <Screen>
      <Global />
      <Desktop>
        {icons.map((it) => (
          <DesktopItem key={it.label}>
            <IconBox>
              {it.art}
              {it.shortcut && <Shortcut />}
            </IconBox>
            <DesktopLabel>{it.label}</DesktopLabel>
          </DesktopItem>
        ))}
      </Desktop>

      <SensorBar>
        {sensors.map((s, i) => (
          <Sensor key={i}>
            <SensorHead>
              {s.icon}
              <SensorName>{s.name}</SensorName>
              <SensorTools />
            </SensorHead>
            <Lcd>
              <LcdGhost>{s.ghost}</LcdGhost>
              <LcdValue>{s.value}</LcdValue>
              <LcdUnit $small={s.small}>{s.unit}</LcdUnit>
            </Lcd>
          </Sensor>
        ))}
      </SensorBar>

      <TaskWindow>
        <TaskTitle>
          <TitleLabel>Windows 工作管理員</TitleLabel>
          <CaptionButton>
            <svg width="8" height="8"><rect x="0" y="6" width="6" height="2" fill="#000" /></svg>
          </CaptionButton>
          <CaptionButton>
            <svg width="10" height="9"><rect x="0.5" y="0.5" width="8" height="8" fill="none" stroke="#000" /><rect x="0" y="0" width="9" height="2" fill="#000" /></svg>
          </CaptionButton>
          <CaptionButton $gap={1}>
            <svg width="9" height="8"><path d="M1 0 L8 8 M8 0 L1 8" stroke="#000" strokeWidth="1.7" /></svg>
          </CaptionButton>
        </TaskTitle>
        <MenuBar>
          <span>檔案(F)</span>
          <span>選項(O)</span>
          <span>檢視(V)</span>
          <span>說明(H)</span>
        </MenuBar>
        <TabRow>
          <Tab $width={60}>應用程式</Tab>
          <Tab $width={60}>處理程序</Tab>
          <Tab $width={36}>效能</Tab>
          <Tab $width={60}>網路功能</Tab>
          <Tab $width={49}>使用者</Tab>
        </TabRow>
        <TabPanel>
          <HistoryRow $after={5}>
            <Group $width={92} $height={80}>
              <GroupLegend $left={6}>CPU 使用率</GroupLegend>
            </Group>
            <Group $grow $height={80}>
              <GroupLegend $left={8}>CPU 使用率記錄</GroupLegend>
              <GraphRow $top={8}>
                <CpuGraphA />
                <CpuGraphB />
              </GraphRow>
            </Group>
          </HistoryRow>
          <HistoryRow $after={7}>
            <Group $width={92} $height={80}>
              <GroupLegend $left={6}>PF 使用量</GroupLegend>
            </Group>
            <Group $grow $height={80}>
              <GroupLegend $left={8}>分頁檔使用記錄</GroupLegend>
              <GraphRow $top={7}>
                <MemGraph />
              </GraphRow>
            </Group>
          </HistoryRow>
          <BottomRow>
            <Group $width={169} $height={123}>
              <GroupLegend $left={6}>總計</GroupLegend>
            </Group>
            <StatColumn>
              <Group $height={58}>
                <GroupLegend $left={7}>實體記憶體 (K)</GroupLegend>
                <StatRow><span>總共</span><span>1047528</span></StatRow>
                <StatRow><span>可用</span><span>782288</span></StatRow>
                <StatRow><span>系統快取記憶體</span><span>383400</span></StatRow>
              </Group>
              <Group $height={57}>
                <GroupLegend $left={7}>核心記憶體 (K)</GroupLegend>
                <StatRow><span>總共</span><span>72760</span></StatRow>
                <StatRow><span>已分頁</span><span>37420</span></StatRow>
                <StatRow><span>未分頁</span><span>35340</span></StatRow>
              </Group>
            </StatColumn>
          </BottomRow>
        </TabPanel>
        <StatusBar>
          <StatusPane $width={95}>處理程序: 47</StatusPane>
          <StatusPane $width={116}>CPU 使用率: 50%</StatusPane>
          <StatusPane $width={179}>認可使用: 371K / 2473K</StatusPane>
          <Grip width="12" height="12" viewBox="0 0 12 12">
            <path d="M11 1 L1 11 M11 5 L5 11 M11 9 L9 11" stroke="#808080" strokeWidth="1.2" />
            <path d="M11 2.5 L2.5 11 M11 6.5 L6.5 11" stroke="#fff" />
          </Grip>
        </StatusBar>
      </TaskWindow>

      <TachWindow>
        <TachTitle>HD Tach version 3.0.1.0  - For non-commercial or evaluation use only, see license agreement.</TachTitle>
        <TachBody>
          <Panel $height={284}>
            <ChartTitle $top={1}>
              Sequential Read Speed
              <br />
              (higher is better)
            </ChartTitle>
            <SpeedChart />
          </Panel>
          <PanelRow>
            <Panel $height={225}>
              <ChartTitle $top={7}>
                Burst Speed
                <br />
                (higher is better)
              </ChartTitle>
              <BurstChart />
            </Panel>
            <Panel $height={225}>
              <DetailPane>
                <DetailHead>Promise 6+2 Disk RAID6 1.10</DetailHead>
                <DetailLine $indent={7}>Tested on 2006-09-03 at 15:25</DetailLine>
                <DetailLine $indent={6}>Random access: 14.1ms</DetailLine>
                <DetailLine $indent={6}>CPU utilization: 5% (+/- 2%)</DetailLine>
                <DetailLine $indent={6}>Average read: 96.0 MB/s</DetailLine>
                <DetailLine $gap>Lower is better for CPU and random access.</DetailLine>
                <DetailLine>Higher is better for average read.</DetailLine>
                <DetailLine>MB/s = 1,000,000 bytes per second.</DetailLine>
                <DetailLine>GB = 1,000,000,000 bytes.</DetailLine>
              </DetailPane>
            </Panel>
          </PanelRow>
          <ButtonRow>
            <WinButton $width={84} $after={16}><u>S</u>ave Results</WinButton>
            <WinButton $width={93} $after={18}><u>U</u>pload Results</WinButton>
            <WinButton $width={124}><u>C</u>ompare Another Drive</WinButton>
            <Copyright>Copyright (C) 2004 Simpli Software, Inc. www.simplisoftware.com</Copyright>
            <DoneButton><DoneFocus><u>D</u>one</DoneFocus></DoneButton>
          </ButtonRow>
        </TachBody>
      </TachWindow>

      <LangBar>
        <svg width="18" height="18" viewBox="0 0 18 18">
          <path d="M9 1 V6" stroke="#888" />
          <ellipse cx="9" cy="11" rx="8" ry="5" fill="#dfe3ea" stroke="#777" />
          <path d="M4 10 H14 M4 12 H14" stroke="#666" strokeDasharray="1 1" />
        </svg>
        <HelpDot>?</HelpDot>
        <svg width="9" height="16" viewBox="0 0 9 16">
          <rect x="2" y="2" width="5" height="2" fill="#000" />
          <path d="M1 10 H8 L4.5 14Z" fill="#000" />
        </svg>
      </LangBar>

      <Taskbar>
        <StartButton><WinFlag />開始</StartButton>
        <QuickLaunch>
          <IeIcon size={16} />
          <FolderSmall />
          <DeskEditSmall />
        </QuickLaunch>
        <TaskGroup>
          <TaskButton><FolderSmall />E:₩AMD 250G</TaskButton>
          <TaskButton><PageSmall />Promise Array Manager - ...</TaskButton>
          <TaskButton><MonitorSmall />Windows 工作管理員</TaskButton>
          <TaskButton><ComputerSmall />我的電腦</TaskButton>
          <TaskButton><ManagerSmall />電腦管理</TaskButton>
          <TaskButton $active><WatchSmall />HD Tach</TaskButton>
        </TaskGroup>
        <Tray>
          <TrayMeter />
          <TraySpeaker />
          <TrayCoin />
          <TrayDiamond />
          <TrayOrb />
          <Clock>下午 03:27</Clock>
        </Tray>
      </Taskbar>
    </Screen>
  );
}
